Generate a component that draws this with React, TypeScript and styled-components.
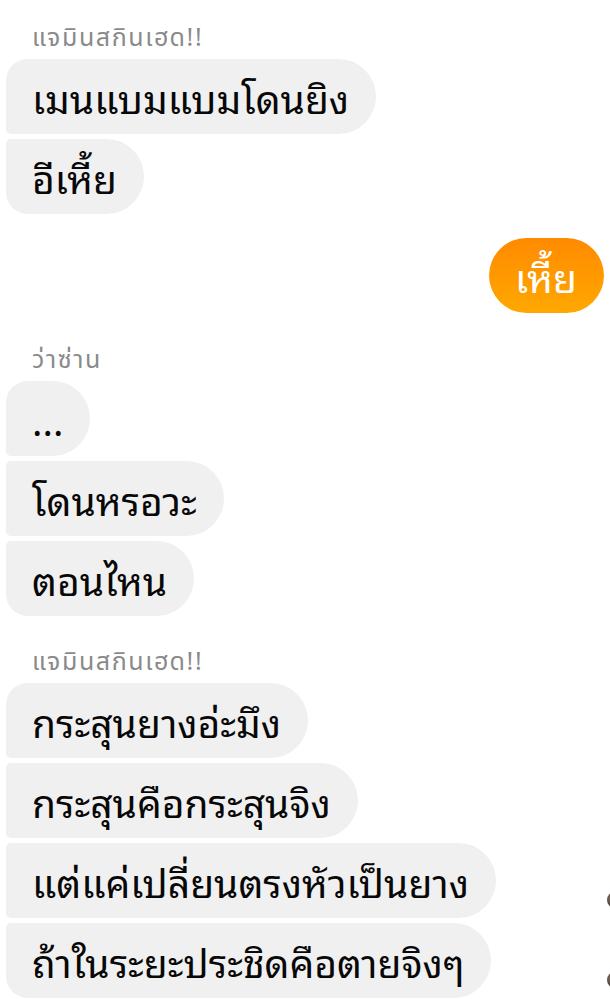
import React from 'react';
import styled, { createGlobalStyle } from 'styled-components';

type Corner = 'first' | 'middle' | 'last' | 'single';

interface Message {
    text: string;
    seen?: boolean;
}

interface Group {
    name?: string;
    mine?: boolean;
    messages: Message[];
}

const GlobalStyle = createGlobalStyle`
    html, body {
        margin: 0;
        padding: 0;
        background: #ffffff;
        overflow: hidden;
    }
    body {
        font-family: "Noto Sans Thai", "Noto Sans", "Liberation Sans", sans-serif;
    }
`

const Chat = styled.div`
    width: 610px;
    height: 999px;
    overflow: hidden;
    padding-top: 24px;
    box-sizing: border-box;
    display: flex;
    flex-direction: column;
`

const GroupBox = styled.div<{ $mine?: boolean; $gap: number }>`
    display: flex;
    flex-direction: column;
    align-items: ${props => props.$mine ? 'flex-end' : 'flex-start'};
    margin-top: ${props => props.$gap}px;
    padding: 0 6px;
`

const SenderName = styled.div`
    font-family: "Noto Sans Thai", "Noto Sans", sans-serif;
    font-size: 25px;
    line-height: 28px;
    letter-spacing: 1.6px;
    color: #8a8a8a;
    padding-left: 26px;
    margin-bottom: 7px;
`

const BubbleList = styled.div<{ $mine?: boolean }>`
    display: flex;
    flex-direction: column;
    align-items: ${props => props.$mine ? 'flex-end' : 'flex-start'};
    gap: 5px;
    width: 100%;
`

const BubbleRow = styled.div`
    position: relative;
    width: 100%;
    display: flex;
`

const radii: Record<Corner, string> = {
    first: '22px 38px 38px 5px',
    middle: '5px 38px 38px 5px',
    last: '5px 38px 38px 22px',
    single: '38px',
}

const Bubble = styled.div<{ $corner: Corner; $mine?: boolean }>`
    height: 75px;
    line-height: 75px;
    padding: 0 27px 0 26px;
    font-family: "Noto Sans Thai Looped", "Noto Serif Thai", serif;
    font-size: 39px;
    white-space: nowrap;
    border-radius: ${props => radii[props.$corner]};
    background: ${props => props.$mine ? 'linear-gradient(180deg, #ff8a00 0%, #ffa800 100%)' : '#f0f0f0'};
    color: ${props => props.$mine ? '#ffffff' : '#080808'};
    margin-left: ${props => props.$mine ? 'auto' : '0'};
`

const SeenAvatar = styled.div`
    position: absolute;
    right: -19px;
    bottom: 10px;
    width: 16px;
    height: 16px;
    border-radius: 50%;
    background: radial-gradient(circle at 40% 40%, #9b8070 0%, #3f3530 70%);
`

const groups: Group[] = [
    {
        name: 'แจมินสกินเฮด!!',
        messages: [{ text: 'เมนแบมแบมโดนยิง' }, { text: 'อีเหี้ย' }],
    },
    {
        mine: true,
        messages: [{ text: 'เหี้ย' }],
    },
    {
        name: 'ว่าซ่าน',
        messages: [{ text: '...' }, { text: 'โดนหรอวะ' }, { text: 'ตอนไหน' }],
    },
    {
        name: 'แจมินสกินเฮด!!',
        messages: [
            { text: 'กระสุนยางอ่ะมึง' },
            { text: 'กระสุนคือกระสุนจิง' },
            { text: 'แต่แค่เปลี่ยนตรงหัวเป็นยาง', seen: true },
            { text: 'ถ้าในระยะประชิดคือตายจิงๆ', seen: true },
        ],
    },
]

const gaps = [0, 24, 33, 32]

const cornerFor = (i: number, count: number, mine?: boolean): Corner => {
    if (mine || count === 1) return 'single';
    if (i === 0) return 'first';
    if (i === count - 1) return 'last';
    return 'middle';
}

const App: React.FC = () => {
    return (
        <>
            <GlobalStyle />
            <Chat>
                {groups.map((g, gi) => (
                    <GroupBox key={gi} $mine={g.mine} $gap={gaps[gi]}>
                        {g.name && <SenderName>{g.name}</SenderName>}
                        <BubbleList $mine={g.mine}>
                            {g.messages.map((m, i) => (
                                <BubbleRow key={i}>
                                    <Bubble $mine={g.mine} $corner={cornerFor(i, g.messages.length, g.mine)}>
                                        {m.text}
                                    </Bubble>
                                    {m.seen && <SeenAvatar />}
                                </BubbleRow>
                            ))}
                        </BubbleList>
                    </GroupBox>
                ))}
            </Chat>
        </>
    )
}

export default App;
